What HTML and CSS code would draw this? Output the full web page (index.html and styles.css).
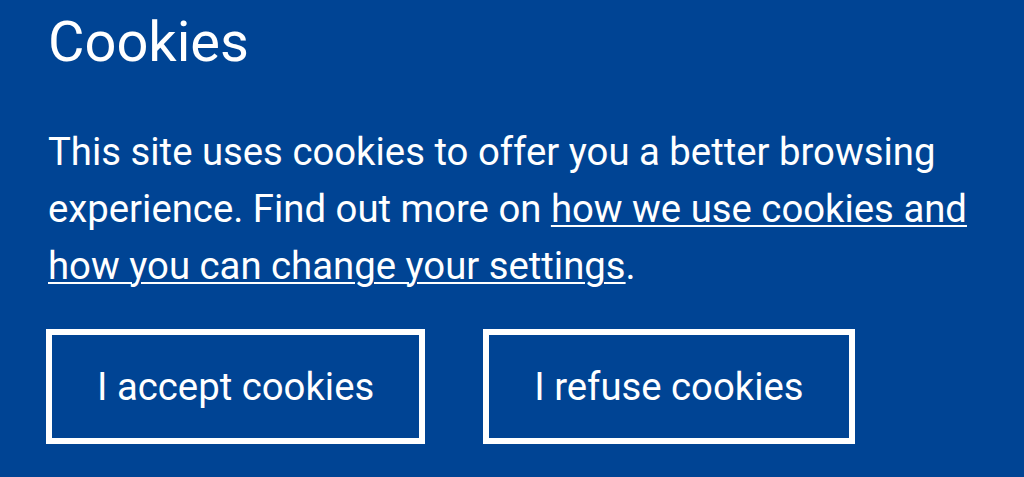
FILE: index.html
```html
<!DOCTYPE html>
<html lang="en">
<head>
<meta charset="utf-8">
<title>Cookies</title>
<link rel="stylesheet" href="styles.css">
</head>
<body>
<div class="banner">
  <h2 class="title">Cookies</h2>
  <p class="text">This site uses cookies to offer you a better browsing experience. Find out more on <a href="#" class="link">how we use cookies and how you can change your settings</a>.</p>
  <div class="actions">
    <button class="btn">I accept cookies</button>
    <button class="btn">I refuse cookies</button>
  </div>
</div>
</body>
</html>
```
FILE: styles.css
```css
html, body {
  margin: 0;
  padding: 0;
  background: #004494;
  height: 100%;
}
body {
  font-family: Roboto, "Liberation Sans", sans-serif;
  color: #fff;
  overflow: hidden;
}
.banner {
  padding: 0 40px 0 48px;
}
.title {
  margin: 0;
  padding-top: 10px;
  font-size: 56px;
  font-weight: 400;
  line-height: 64px;
}
.text {
  margin: 49px 0 0;
  font-size: 38.3px;
  line-height: 57px;
}
.link {
  color: #fff;
  text-decoration: underline;
  text-underline-offset: 3px;
  text-decoration-thickness: 2px;
}
.actions {
  display: flex;
  gap: 58px;
  margin-top: 35px;
  margin-left: -2px;
}
.btn {
  font-family: Roboto, "Liberation Sans", sans-serif;
  font-size: 38.3px;
  color: #fff;
  background: #004494;
  border: 6px solid #fff;
  padding: 29px 45px 28px;
  line-height: 46px;
  cursor: pointer;
  margin: 0;
}
```
